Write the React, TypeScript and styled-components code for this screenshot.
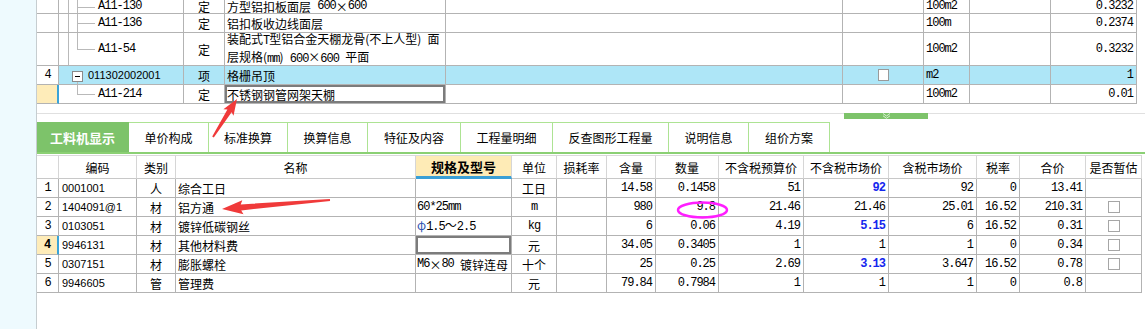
import React from 'react';
import styled, { createGlobalStyle, css } from 'styled-components';

const GlobalStyle = createGlobalStyle`
  html, body { margin: 0; padding: 0; background: #fff; overflow: hidden; }
  body { font-family: "Noto Sans CJK SC", sans-serif; font-size: 12px; color: #000; }
  * { box-sizing: border-box; }
`;

type Align = 'left' | 'center' | 'right';
type Font = 'mono' | 'sans' | 'cjk';

const fonts = {
  mono: css`font-family: "Liberation Mono", monospace; font-size: 12px; letter-spacing: -1px;`,
  sans: css`font-family: "Liberation Sans", Arial, sans-serif; font-size: 11px;`,
  cjk: css`font-family: "Noto Sans CJK SC", sans-serif; font-size: 12px;`,
};

const Page = styled.div`
  position: relative;
  width: 1145px;
  height: 329px;
  display: flex;
  overflow: hidden;
  background: #fff;
`;

const SideStrip = styled.div`
  flex: none;
  width: 37px;
  background: #eefafe;
  border-right: 1px solid #c6cdd0;
`;

const Main = styled.div`
  flex: 1;
  min-width: 0;
  display: flex;
  flex-direction: column;
`;

const TopTable = styled.div`
  display: flex;
  flex-direction: column;
`;

const TopRowGrid = styled.div<{ $h: number }>`
  display: grid;
  grid-template-columns: 22px 125px 41px 221px 397px 81px 46px 81px 86px 1fr;
  height: ${p => p.$h}px;
`;

const BotRowGrid = styled.div<{ $h: number }>`
  display: grid;
  grid-template-columns: 22px 78px 39px 240px 96px 45px 50px 49px 63px 85px 85px 88px 43px 66px 56px 1fr;
  height: ${p => p.$h}px;
`;

const Cell = styled.div<{
  $align?: Align;
  $f?: Font;
  $bg?: string;
  $pad?: number;
  $padL?: number;
  $sel?: boolean;
  $bar?: boolean;
  $bold?: boolean;
  $color?: string;
  $wrap?: boolean;
  $lh?: number;
}>`
  position: relative;
  display: flex;
  align-items: center;
  justify-content: ${p => (p.$align === 'right' ? 'flex-end' : p.$align === 'center' ? 'center' : 'flex-start')};
  padding: 0 ${p => p.$pad ?? 2}px 0 ${p => p.$padL ?? p.$pad ?? 2}px;
  border-right: ${p => (p.$bar ? '2px solid #3aa3d8' : '1px solid #b3b3b3')};
  border-bottom: 1px solid #b3b3b3;
  background: ${p => p.$bg ?? '#fff'};
  white-space: ${p => (p.$wrap ? 'normal' : 'nowrap')};
  overflow: hidden;
  line-height: ${p => p.$lh ?? (p.$wrap ? 16 : 15)}px;
  color: ${p => p.$color ?? '#000'};
  font-weight: ${p => (p.$bold ? 'bold' : 'normal')};
  ${p => fonts[p.$f ?? 'cjk']}
  ${p => p.$sel && css`box-shadow: inset 0 0 0 2px #7c7c7c;`}
`;

const Filler = styled.div`
  background: #fff;
`;

const HeadCell = styled.div<{ $spec?: boolean }>`
  display: flex;
  align-items: center;
  justify-content: center;
  border-top: 1px solid #dadada;
  border-right: 1px solid #d6d6d6;
  border-bottom: 1px solid #c8c8c8;
  background: #fff;
  font-family: "Noto Sans CJK SC", sans-serif;
  font-size: 12px;
  white-space: nowrap;
  ${p =>
    p.$spec &&
    css`
      background: #feebb6;
      border-bottom: 3px solid #3a9fd6;
      font-weight: bold;
      font-size: 13px;
    `}
`;

const MonoRun = styled.span`
  font-family: "Liberation Mono", monospace;
  font-size: 12px;
  letter-spacing: -1px;
  white-space: pre;
`;

const Wide = styled.span`
  display: inline-block;
  width: 12px;
  text-align: center;
`;

const Phi = styled.span`
  color: #2f56b0;
`;

const TreeV = styled.span<{ $x: number; $top?: string; $bottom?: string }>`
  position: absolute;
  left: ${p => p.$x}px;
  top: ${p => p.$top ?? '0'};
  bottom: ${p => p.$bottom ?? '0'};
  width: 1px;
  background: #b9b9b9;
`;

const TreeH = styled.span<{ $x: number; $w: number }>`
  position: absolute;
  left: ${p => p.$x}px;
  top: 50%;
  width: ${p => p.$w}px;
  height: 1px;
  background: #b9b9b9;
`;

const ExpandBox = styled.span`
  position: absolute;
  left: 13px;
  top: 5px;
  width: 11px;
  height: 11px;
  border: 1px solid #8a8a8a;
  background: #fff;
  &::after {
    content: '';
    position: absolute;
    left: 2px;
    right: 2px;
    top: 4px;
    height: 1px;
    background: #000;
  }
`;

const TopCheck = styled.span`
  width: 11px;
  height: 12px;
  border: 1px solid #9a9a9a;
  background: #fff;
`;

const Check = styled.span`
  width: 12px;
  height: 12px;
  border: 1px solid #a6a6a6;
  background: #fff;
`;

const Splitter = styled.div`
  margin-top: 9px;
  height: 9px;
  border-top: 1px solid #e0e0e0;
  display: flex;
  align-items: flex-start;
`;

const Handle = styled.div`
  margin-left: 807px;
  margin-top: -1px;
  width: 84px;
  height: 6px;
  background: #7dc36a;
  display: flex;
  justify-content: center;
  align-items: center;
`;

const TabBar = styled.div`
  display: flex;
  height: 32px;
  border-bottom: 2px solid #8bd074;
  margin-bottom: 1px;
`;

const Tab = styled.div<{ $w: number; $active?: boolean }>`
  width: ${p => p.$w}px;
  flex: none;
  display: flex;
  align-items: center;
  justify-content: center;
  border-top: 1px solid #ade393;
  border-right: 1px solid #ade393;
  font-family: "Noto Sans CJK SC", sans-serif;
  font-size: 12px;
  color: #000;
  ${p =>
    p.$active &&
    css`
      background: #7dc36a;
      border-color: #7dc36a;
      color: #fff;
      font-weight: bold;
      font-size: 13px;
    `}
`;

const BottomTable = styled.div`
  display: flex;
  flex-direction: column;
`;

const Overlay = styled.svg`
  position: absolute;
  left: 0;
  top: 0;
  pointer-events: none;
`;

function Mixed({ text }: { text: string }) {
  const parts = text.split(/([A-Za-z0-9.*@\- ]+|×)/);
  return (
    <>
      {parts.map((p, i) => {
        if (!p) return null;
        if (p === '×') return <Wide key={i}>×</Wide>;
        if (i % 2) return <MonoRun key={i}>{p}</MonoRun>;
        return <React.Fragment key={i}>{p}</React.Fragment>;
      })}
    </>
  );
}

type Tree = 'child' | 'lastChild' | 'parent' | 'onlyChild';

interface TopRow {
  h: number;
  lh?: number;
  num?: string;
  numSel?: boolean;
  tree: Tree;
  code: string;
  type: string;
  name: React.ReactNode;
  nameSel?: boolean;
  check?: boolean;
  unit: string;
  qty: string;
  hl?: boolean;
}

const topRows: TopRow[] = [
  { h: 14, lh: 13, tree: 'child', code: 'A11-130', type: '定', name: <Mixed text="方型铝扣板面层 600×600" />, unit: '100m2', qty: '0.3232' },
  { h: 19, tree: 'child', code: 'A11-136', type: '定', name: '铝扣板收边线面层', unit: '100m', qty: '0.2374' },
  {
    h: 33,
    tree: 'lastChild',
    code: 'A11-54',
    type: '定',
    name: (
      <span>
        <Mixed text="装配式T型铝合金天棚龙骨(不上人型) 面" />
        <br />
        <Mixed text="层规格(mm) 600×600 平面" />
      </span>
    ),
    unit: '100m2',
    qty: '0.3232',
  },
  { h: 19, num: '4', tree: 'parent', code: '011302002001', type: '项', name: '格栅吊顶', check: true, unit: 'm2', qty: '1', hl: true },
  { h: 19, numSel: true, tree: 'onlyChild', code: 'A11-214', type: '定', name: '不锈钢钢管网架天棚', nameSel: true, unit: '100m2', qty: '0.01' },
];

function TreeLines({ tree }: { tree: Tree }) {
  if (tree === 'parent')
    return (
      <>
        <ExpandBox />
        <TreeV $x={18} $top="16px" />
      </>
    );
  if (tree === 'onlyChild')
    return (
      <>
        <TreeV $x={18} $bottom="50%" />
        <TreeH $x={18} $w={18} />
      </>
    );
  return (
    <>
      <TreeV $x={9} />
      <TreeV $x={18} $bottom={tree === 'lastChild' ? '50%' : '0'} />
      <TreeH $x={18} $w={18} />
    </>
  );
}

interface BotRow {
  n: string;
  sel?: boolean;
  code: string;
  type: string;
  name: string;
  spec?: React.ReactNode;
  specSel?: boolean;
  unit: React.ReactNode;
  han: string;
  qty: string;
  budget: string;
  market: string;
  blue?: boolean;
  taxed: string;
  rate: string;
  total: string;
  check: boolean;
}

const botRows: BotRow[] = [
  { n: '1', code: '0001001', type: '人', name: '综合工日', unit: '工日', han: '14.58', qty: '0.1458', budget: '51', market: '92', blue: true, taxed: '92', rate: '0', total: '13.41', check: false },
  { n: '2', code: '1404091@1', type: '材', name: '铝方通', spec: <MonoRun>60*25mm</MonoRun>, unit: <MonoRun>m</MonoRun>, han: '980', qty: '9.8', budget: '21.46', market: '21.46', taxed: '25.01', rate: '16.52', total: '210.31', check: true },
  {
    n: '3',
    code: '0103051',
    type: '材',
    name: '镀锌低碳钢丝',
    spec: (
      <span>
        <Phi>φ</Phi>
        <MonoRun>1.5</MonoRun>～<MonoRun>2.5</MonoRun>
      </span>
    ),
    unit: <MonoRun>kg</MonoRun>,
    han: '6',
    qty: '0.06',
    budget: '4.19',
    market: '5.15',
    blue: true,
    taxed: '6',
    rate: '16.52',
    total: '0.31',
    check: true,
  },
  { n: '4', sel: true, code: '9946131', type: '材', name: '其他材料费', specSel: true, unit: '元', han: '34.05', qty: '0.3405', budget: '1', market: '1', taxed: '1', rate: '0', total: '0.34', check: true },
  { n: '5', code: '0307151', type: '材', name: '膨胀螺栓', spec: <Mixed text="M6×80 镀锌连母" />, unit: '十个', han: '25', qty: '0.25', budget: '2.69', market: '3.13', blue: true, taxed: '3.647', rate: '16.52', total: '0.78', check: true },
  { n: '6', code: '9946605', type: '管', name: '管理费', unit: '元', han: '79.84', qty: '0.7984', budget: '1', market: '1', taxed: '1', rate: '0', total: '0.8', check: false },
];

const headers = ['', '编码', '类别', '名称', '规格及型号', '单位', '损耗率', '含量', '数量', '不含税预算价', '不含税市场价', '含税市场价', '税率', '合价', '是否暂估'];

const tabs: { label: string; w: number }[] = [
  { label: '工料机显示', w: 92 },
  { label: '单价构成', w: 80 },
  { label: '标准换算', w: 79 },
  { label: '换算信息', w: 80 },
  { label: '特征及内容', w: 93 },
  { label: '工程量明细', w: 92 },
  { label: '反查图形工程量', w: 116 },
  { label: '说明信息', w: 80 },
  { label: '组价方案', w: 81 },
];

type Pt = [number, number];

function arrow(tail: Pt, tip: Pt, headLen: number, headW: number, shaftTail: number, shaftHead: number): string {
  const dx = tip[0] - tail[0];
  const dy = tip[1] - tail[1];
  const len = Math.hypot(dx, dy);
  const ux = dx / len;
  const uy = dy / len;
  const nx = -uy;
  const ny = ux;
  const bx = tip[0] - ux * headLen;
  const by = tip[1] - uy * headLen;
  const pts: Pt[] = [
    [tail[0] + nx * shaftTail, tail[1] + ny * shaftTail],
    [bx + nx * shaftHead, by + ny * shaftHead],
    [bx - ux * 2 + nx * headW, by - uy * 2 + ny * headW],
    tip,
    [bx - ux * 2 - nx * headW, by - uy * 2 - ny * headW],
    [bx - nx * shaftHead, by - ny * shaftHead],
    [tail[0] - nx * shaftTail, tail[1] - ny * shaftTail],
  ];
  return pts.map(p => `${p[0].toFixed(1)},${p[1].toFixed(1)}`).join(' ');
}

export default function App() {
  const HL = '#aee6f7';
  return (
    <>
      <GlobalStyle />
      <Page>
        <SideStrip />
        <Main>
          <TopTable>
            {topRows.map((r, i) => {
              const bg = r.hl ? HL : '#fff';
              return (
                <TopRowGrid key={i} $h={r.h}>
                  <Cell $align="center" $f="mono" $lh={r.lh} $bg={r.numSel ? '#feecb9' : '#fff'} $bar={r.numSel}>
                    {r.num}
                  </Cell>
                  <Cell $f={r.tree === 'parent' ? 'sans' : 'mono'} $lh={r.lh} $bg={bg} $padL={r.tree === 'parent' ? 29 : 39}>
                    <TreeLines tree={r.tree} />
                    {r.code}
                  </Cell>
                  <Cell $align="center" $lh={r.lh} $bg={bg}>
                    {r.type}
                  </Cell>
                  <Cell $bg={bg} $lh={r.lh} $sel={r.nameSel} $wrap={r.h > 19}>
                    {r.name}
                  </Cell>
                  <Cell $bg={bg} />
                  <Cell $align="center" $bg={bg}>
                    {r.check && <TopCheck />}
                  </Cell>
                  <Cell $f="mono" $lh={r.lh} $bg={bg}>
                    {r.unit}
                  </Cell>
                  <Cell $bg={bg} />
                  <Cell $f="mono" $lh={r.lh} $align="right" $pad={3} $bg={bg}>
                    {r.qty}
                  </Cell>
                  <Filler />
                </TopRowGrid>
              );
            })}
          </TopTable>

          <Splitter>
            <Handle>
              <svg width="9" height="6" viewBox="0 0 9 6">
                <polyline points="1,0.5 4.5,3 8,0.5" fill="none" stroke="#d9f2d2" strokeWidth="1" />
                <polyline points="1,2.8 4.5,5.3 8,2.8" fill="none" stroke="#d9f2d2" strokeWidth="1" />
              </svg>
            </Handle>
          </Splitter>

          <TabBar>
            {tabs.map((t, i) => (
              <Tab key={t.label} $w={t.w} $active={i === 0}>
                {t.label}
              </Tab>
            ))}
          </TabBar>

          <BottomTable>
            <BotRowGrid $h={24}>
              {headers.map((h, i) => (
                <HeadCell key={i} $spec={h === '规格及型号'}>
                  {h}
                </HeadCell>
              ))}
              <Filler />
            </BotRowGrid>
            {botRows.map(r => (
              <BotRowGrid key={r.n} $h={19}>
                <Cell $align="center" $f="mono" $bg={r.sel ? '#feecb9' : '#fff'} $bar={r.sel} $bold={r.sel}>
                  {r.n}
                </Cell>
                <Cell $f="sans" $padL={3}>
                  {r.code}
                </Cell>
                <Cell $align="center">{r.type}</Cell>
                <Cell>{r.name}</Cell>
                <Cell $pad={1} $sel={r.specSel}>
                  {r.spec}
                </Cell>
                <Cell $align="center">{r.unit}</Cell>
                <Cell />
                <Cell $f="mono" $align="right" $pad={3}>
                  {r.han}
                </Cell>
                <Cell $f="mono" $align="right" $pad={3}>
                  {r.qty}
                </Cell>
                <Cell $f="mono" $align="right" $pad={3}>
                  {r.budget}
                </Cell>
                <Cell $f="mono" $align="right" $pad={3} $bold={r.blue} $color={r.blue ? '#1426ee' : undefined}>
                  {r.market}
                </Cell>
                <Cell $f="mono" $align="right" $pad={3}>
                  {r.taxed}
                </Cell>
                <Cell $f="mono" $align="right" $pad={3}>
                  {r.rate}
                </Cell>
                <Cell $f="mono" $align="right" $pad={3}>
                  {r.total}
                </Cell>
                <Cell $align="center">{r.check && <Check />}</Cell>
                <Filler />
              </BotRowGrid>
            ))}
          </BottomTable>
        </Main>

        <Overlay width={1145} height={329} viewBox="0 0 1145 329">
          <polygon points={arrow([213, 137], [237, 99], 14, 6, 1, 2.5)} fill="#f03a3a" />
          <polygon points={arrow([330, 200], [222, 209], 19, 7, 1, 3)} fill="#f03a3a" />
          <ellipse cx={702.5} cy={210} rx={24.5} ry={7.5} fill="none" stroke="#ff1eff" strokeWidth={2.5} />
        </Overlay>
      </Page>
    </>
  );
}
